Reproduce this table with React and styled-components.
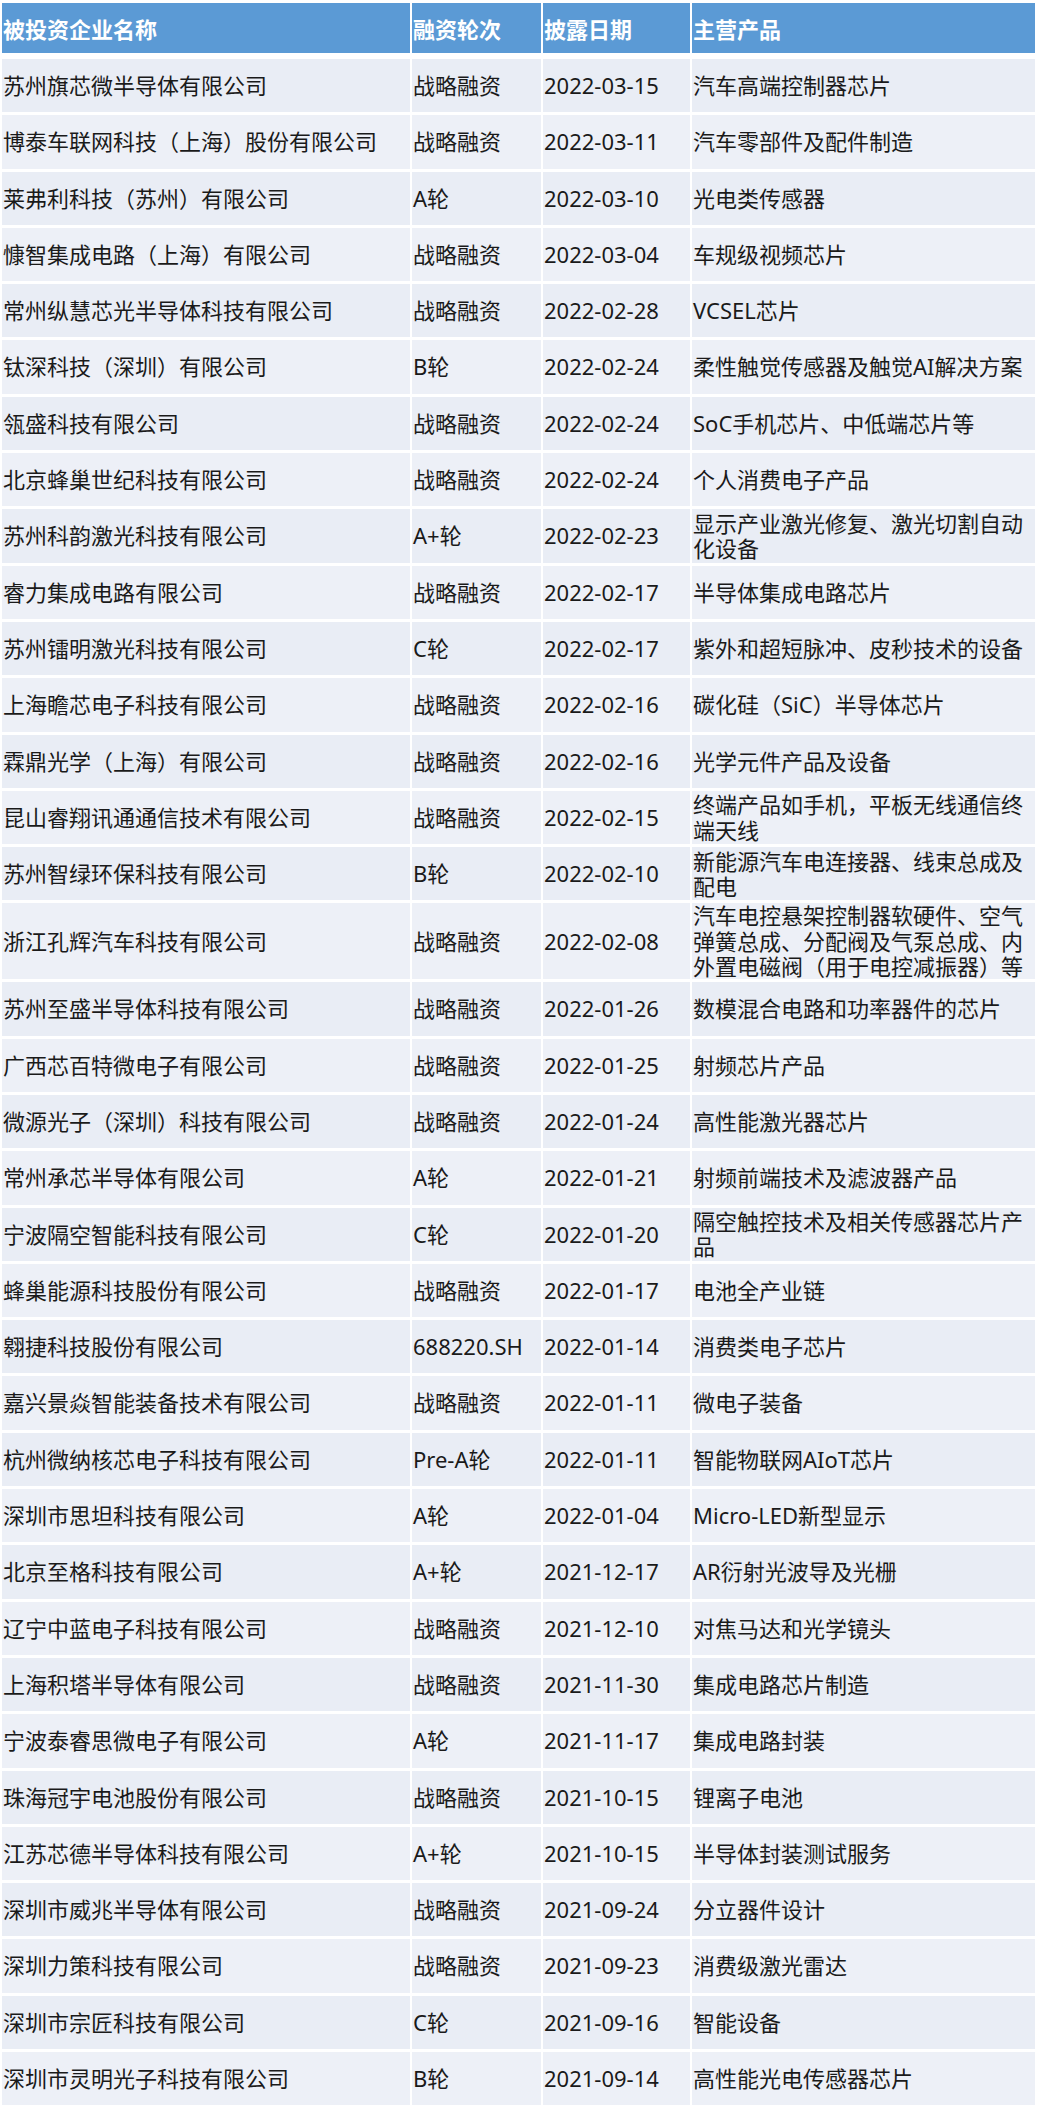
import React from "react";
import styled, { createGlobalStyle } from "styled-components";

const GlobalStyle = createGlobalStyle`
  html, body {
    margin: 0;
    padding: 0;
    background: #ffffff;
  }
  body {
    font-family: "Noto Sans", "Noto Sans CJK SC", sans-serif;
  }
`;

const rows = [
  ["苏州旗芯微半导体有限公司", "战略融资", "2022-03-15", "汽车高端控制器芯片"],
  ["博泰车联网科技（上海）股份有限公司", "战略融资", "2022-03-11", "汽车零部件及配件制造"],
  ["莱弗利科技（苏州）有限公司", "A轮", "2022-03-10", "光电类传感器"],
  ["慷智集成电路（上海）有限公司", "战略融资", "2022-03-04", "车规级视频芯片"],
  ["常州纵慧芯光半导体科技有限公司", "战略融资", "2022-02-28", "VCSEL芯片"],
  ["钛深科技（深圳）有限公司", "B轮", "2022-02-24", "柔性触觉传感器及触觉AI解决方案"],
  ["瓴盛科技有限公司", "战略融资", "2022-02-24", "SoC手机芯片、中低端芯片等"],
  ["北京蜂巢世纪科技有限公司", "战略融资", "2022-02-24", "个人消费电子产品"],
  ["苏州科韵激光科技有限公司", "A+轮", "2022-02-23", "显示产业激光修复、激光切割自动化设备"],
  ["睿力集成电路有限公司", "战略融资", "2022-02-17", "半导体集成电路芯片"],
  ["苏州镭明激光科技有限公司", "C轮", "2022-02-17", "紫外和超短脉冲、皮秒技术的设备"],
  ["上海瞻芯电子科技有限公司", "战略融资", "2022-02-16", "碳化硅（SiC）半导体芯片"],
  ["霖鼎光学（上海）有限公司", "战略融资", "2022-02-16", "光学元件产品及设备"],
  ["昆山睿翔讯通通信技术有限公司", "战略融资", "2022-02-15", "终端产品如手机，平板无线通信终端天线"],
  ["苏州智绿环保科技有限公司", "B轮", "2022-02-10", "新能源汽车电连接器、线束总成及配电"],
  ["浙江孔辉汽车科技有限公司", "战略融资", "2022-02-08", "汽车电控悬架控制器软硬件、空气弹簧总成、分配阀及气泵总成、内外置电磁阀（用于电控减振器）等"],
  ["苏州至盛半导体科技有限公司", "战略融资", "2022-01-26", "数模混合电路和功率器件的芯片"],
  ["广西芯百特微电子有限公司", "战略融资", "2022-01-25", "射频芯片产品"],
  ["微源光子（深圳）科技有限公司", "战略融资", "2022-01-24", "高性能激光器芯片"],
  ["常州承芯半导体有限公司", "A轮", "2022-01-21", "射频前端技术及滤波器产品"],
  ["宁波隔空智能科技有限公司", "C轮", "2022-01-20", "隔空触控技术及相关传感器芯片产品"],
  ["蜂巢能源科技股份有限公司", "战略融资", "2022-01-17", "电池全产业链"],
  ["翱捷科技股份有限公司", "688220.SH", "2022-01-14", "消费类电子芯片"],
  ["嘉兴景焱智能装备技术有限公司", "战略融资", "2022-01-11", "微电子装备"],
  ["杭州微纳核芯电子科技有限公司", "Pre-A轮", "2022-01-11", "智能物联网AIoT芯片"],
  ["深圳市思坦科技有限公司", "A轮", "2022-01-04", "Micro-LED新型显示"],
  ["北京至格科技有限公司", "A+轮", "2021-12-17", "AR衍射光波导及光栅"],
  ["辽宁中蓝电子科技有限公司", "战略融资", "2021-12-10", "对焦马达和光学镜头"],
  ["上海积塔半导体有限公司", "战略融资", "2021-11-30", "集成电路芯片制造"],
  ["宁波泰睿思微电子有限公司", "A轮", "2021-11-17", "集成电路封装"],
  ["珠海冠宇电池股份有限公司", "战略融资", "2021-10-15", "锂离子电池"],
  ["江苏芯德半导体科技有限公司", "A+轮", "2021-10-15", "半导体封装测试服务"],
  ["深圳市威兆半导体有限公司", "战略融资", "2021-09-24", "分立器件设计"],
  ["深圳力策科技有限公司", "战略融资", "2021-09-23", "消费级激光雷达"],
  ["深圳市宗匠科技有限公司", "C轮", "2021-09-16", "智能设备"],
  ["深圳市灵明光子科技有限公司", "B轮", "2021-09-14", "高性能光电传感器芯片"],
];

const headers = ["被投资企业名称", "融资轮次", "披露日期", "主营产品"];

const Sheet = styled.div`
  display: grid;
  grid-template-columns: 408px 129px 147px 343px;
  column-gap: 2px;
  row-gap: 3px;
  padding: 3px 2px 0 2px;
  width: 1037px;
  box-sizing: border-box;
`;

const HeadCell = styled.div`
  display: flex;
  align-items: center;
  height: 50px;
  margin-bottom: 3px;
  padding-left: 1px;
  background: #5b9ad5;
  color: #ffffff;
  font-size: 22px;
  font-weight: 700;
  white-space: nowrap;
`;

const Cell = styled.div`
  display: flex;
  align-items: center;
  min-height: 53.3px;
  padding-left: 1px;
  background: ${({ $even }) => ($even ? "#edf0f7" : "#e9edf5")};
  color: #1a1a1a;
  font-size: 22px;
  line-height: 25.3px;
  word-break: break-all;
`;

const App = () => (
  <>
    <GlobalStyle />
    <Sheet>
      {headers.map((h) => (
        <HeadCell key={h}>{h}</HeadCell>
      ))}
      {rows.map((row, i) =>
        row.map((text, j) => (
          <Cell key={`${i}-${j}`} $even={i % 2 === 1}>
            {text}
          </Cell>
        ))
      )}
    </Sheet>
  </>
);

export default App;
